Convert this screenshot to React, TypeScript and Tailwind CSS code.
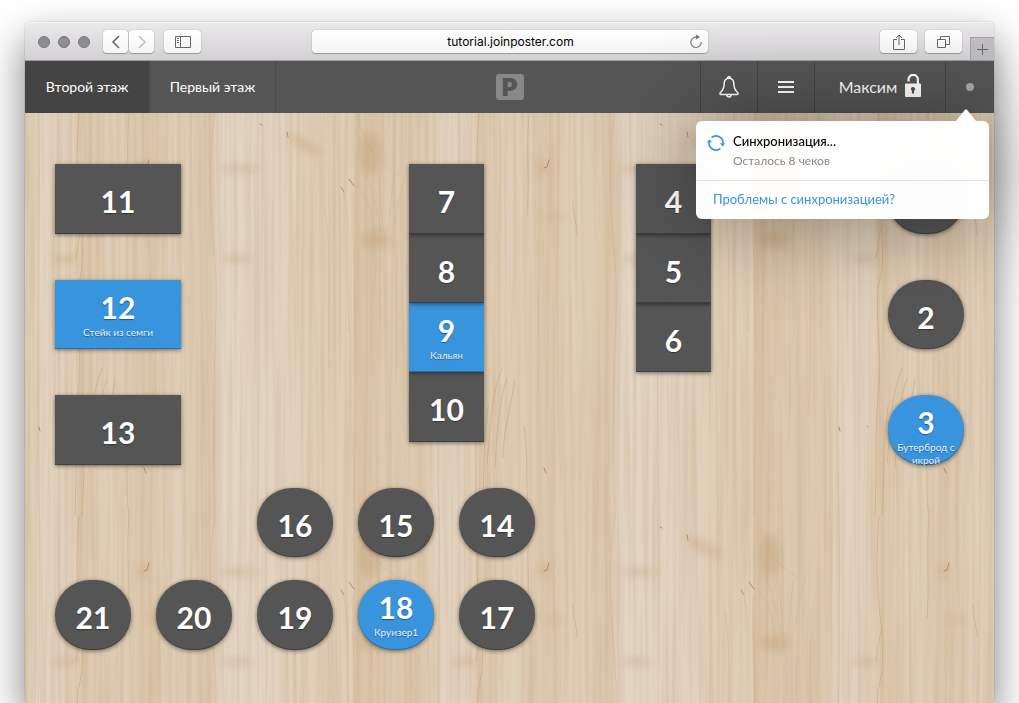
import React from "react";
import clsx from "clsx";

type Table = {
  id: number;
  x: number;
  y: number;
  shape: "long" | "square" | "round";
  tall?: boolean;
  order?: string;
};

const TABLES: Table[] = [
  { id: 11, x: 30, y: 51, shape: "long", tall: true },
  { id: 12, x: 30, y: 167, shape: "long", order: "Стейк из семги" },
  { id: 13, x: 30, y: 282, shape: "long", tall: true },
  { id: 10, x: 384, y: 259, shape: "square", tall: true },
  { id: 9, x: 384, y: 190, shape: "square", order: "Кальян" },
  { id: 8, x: 384, y: 121, shape: "square" },
  { id: 7, x: 384, y: 51, shape: "square", tall: true },
  { id: 6, x: 611, y: 190, shape: "square" },
  { id: 5, x: 611, y: 121, shape: "square" },
  { id: 4, x: 611, y: 51, shape: "square", tall: true },
  { id: 1, x: 863, y: 51, shape: "round", tall: true },
  { id: 2, x: 863, y: 167, shape: "round" },
  { id: 3, x: 863, y: 282, shape: "round", tall: true, order: "Бутерброд с икрой" },
  { id: 16, x: 232, y: 375, shape: "round" },
  { id: 15, x: 333, y: 375, shape: "round" },
  { id: 14, x: 434, y: 375, shape: "round" },
  { id: 21, x: 30, y: 467, shape: "round", tall: true },
  { id: 20, x: 131, y: 467, shape: "round", tall: true },
  { id: 19, x: 232, y: 467, shape: "round", tall: true },
  { id: 18, x: 333, y: 467, shape: "round", tall: true, order: "Круизер1" },
  { id: 17, x: 434, y: 467, shape: "round", tall: true },
];

const FLOORS = ["Второй этаж", "Первый этаж"];

export default function App() {
  return (
    <div className="flex min-h-screen flex-col overflow-hidden bg-white px-[25px] pt-[22px] font-['Lato','Noto_Sans',sans-serif]">
      <div className="flex flex-1 flex-col rounded-[5px] shadow-[0_0_1px_rgba(0,0,0,0.6),0_18px_42px_rgba(0,0,0,0.52)]">
        <BrowserBar />
        <Header />
        <Floor />
      </div>
    </div>
  );
}

function BrowserBar() {
  return (
    <div className="grid h-[39px] grid-cols-[1fr_minmax(0,396px)_1fr] items-center rounded-t-[5px] border-b border-[#9d9c9e] bg-linear-to-b from-[#ebe9eb] to-[#d3d1d3] pt-px shadow-[inset_0_1px_0_#f6f5f6]">
      <div className="flex items-center pl-[13px]">
        <div className="flex gap-2">
          {[0, 1, 2].map(i => (
            <span key={i} className="h-3 w-3 rounded-full border border-[#77767b] bg-[#8e8d92]" />
          ))}
        </div>
        <div className="ml-[13px] flex gap-px">
          <ToolButton label="Назад" className="w-[25px] text-[#5f5f5f]">
            <svg width="8" height="14" viewBox="0 0 8 14" fill="none" stroke="currentColor" strokeWidth="1.5"><path d="M7 1 1 7l6 6" /></svg>
          </ToolButton>
          <ToolButton label="Вперёд" className="w-[25px] text-[#bdbdbd]">
            <svg width="8" height="14" viewBox="0 0 8 14" fill="none" stroke="currentColor" strokeWidth="1.5"><path d="m1 1 6 6-6 6" /></svg>
          </ToolButton>
        </div>
        <ToolButton label="Боковая панель" className="ml-[10px] w-[37px] text-[#666]">
          <svg width="16" height="12" viewBox="0 0 16 12" fill="none" stroke="currentColor">
            <path d="M.5.5h15v11H.5zM5.5.5v11M2 2.5h2M2 4.500h2M2 6.500h2" />
          </svg>
        </ToolButton>
      </div>

      <div className="flex h-[23px] items-center rounded-[4px] bg-linear-to-b from-white to-[#f4f4f4] pr-[5px] pl-[21px] shadow-[0_0_1px_rgba(0,0,0,0.5),0_1px_1px_rgba(0,0,0,0.25)]">
        <input
          aria-label="Адрес"
          defaultValue="tutorial.joinposter.com"
          className="w-full min-w-0 bg-transparent text-center font-['Inter',sans-serif] text-[12px] leading-4 text-black outline-none"
        />
        <button aria-label="Обновить" className="text-[#777]">
          <svg width="14" height="15" viewBox="0 0 14 15" fill="none" stroke="currentColor" strokeWidth="1.2">
            <path d="M8 3.200A5.200 5.200 0 1 0 12.200 8" />
            <path d="M7 .5v5l4-2.500z" fill="currentColor" stroke="none" />
          </svg>
        </button>
      </div>

      <div className="flex h-full items-center justify-end">
        <ToolButton label="Поделиться" className="w-[37px] text-[#666]">
          <svg width="12" height="16" viewBox="0 0 12 16" fill="none" stroke="currentColor">
            <path d="M4 5.500H.5v10h11v-10H8M6 11V1M3 4l3-3 3 3" />
          </svg>
        </ToolButton>
        <ToolButton label="Показать вкладки" className="ml-2 w-[37px] text-[#666]">
          <svg width="13" height="12" viewBox="0 0 13 12" fill="none" stroke="currentColor">
            <path d="M.5 3.500h8v8h-8zM3.500 3.500v-3h9v8h-4" />
          </svg>
        </ToolButton>
        <button aria-label="Новая вкладка" className="ml-2 grid h-[23px] w-6 place-items-center self-end border-t border-l border-[#a3a2a4] bg-[#bfbdbf] text-[#666]">
          <svg width="11" height="11" viewBox="0 0 11 11" stroke="currentColor"><path d="M5.500 0v11M0 5.500h11" /></svg>
        </button>
      </div>
    </div>
  );
}

function ToolButton({ label, className, children }: { label: string; className: string; children: React.ReactNode }) {
  return (
    <button
      aria-label={label}
      className={clsx(
        "grid h-[23px] place-items-center rounded-[4px] bg-linear-to-b from-white to-[#f4f4f4] shadow-[0_0_1px_rgba(0,0,0,0.5),0_1px_1px_rgba(0,0,0,0.25)]",
        className
      )}
    >
      {children}
    </button>
  );
}

function Header() {
  return (
    <header className="relative z-10 grid h-[52px] grid-cols-[1fr_auto_1fr] items-center bg-[#555] text-white">
      <nav className="flex h-full">
        {FLOORS.map((floor, i) => (
          <button
            key={floor}
            className={clsx(
              "h-full border-r border-[#4b4b4b] text-[14px] leading-5 whitespace-nowrap",
              i === 0 ? "w-[125px] bg-[#444]" : "w-[126px]"
            )}
          >
            {floor}
          </button>
        ))}
      </nav>

      <div className="grid h-[26px] w-7 place-items-center rounded-[3px] bg-[#888] font-['Inter',sans-serif] text-[24px] leading-7 font-black text-[#555]">P</div>

      <div className="flex h-full justify-end">
        <button aria-label="Уведомления" className="grid h-full w-[57px] place-items-center border-l border-[#444]">
          <svg width="20" height="22" viewBox="0 0 20 22" fill="none" stroke="currentColor" strokeWidth="1.500" strokeLinejoin="round">
            <path d="M10 2.200C6.900 2.200 5.200 4.600 5.200 7.600c0 4.700-1.300 7-3.900 9.200-.7.900-.3 1.700.7 1.700h16c1 0 1.400-.8.700-1.700-2.600-2.200-3.900-4.500-3.900-9.200 0-3-1.700-5.400-4.800-5.400Z" />
            <path d="M8.500 2.200a1.500 1.500 0 0 1 3 0M7.800 18.800a2.200 2.200 0 0 0 4.400 0" />
          </svg>
        </button>
        <button aria-label="Меню" className="grid h-full w-[57px] place-items-center border-l border-[#444]">
          <svg width="16" height="12" viewBox="0 0 16 12" fill="currentColor"><path d="M0 0h16v2H0zM0 5h16v2H0zM0 10h16v2H0z" /></svg>
        </button>
        <button className="flex h-full w-[131px] items-center justify-center gap-2 border-l border-[#444] text-[16px] leading-5">
          Максим
          <svg width="16" height="23" viewBox="0 0 16 23" className="mb-1">
            <path d="M3.500 7.500V5.500a4.700 4.700 0 0 1 9.400 0V10" fill="none" stroke="currentColor" strokeWidth="2.200" />
            <path fill="currentColor" fillRule="evenodd" d="M1 9.500h14a1 1 0 0 1 1 1V22a1 1 0 0 1-1 1H1a1 1 0 0 1-1-1V10.500a1 1 0 0 1 1-1Zm7 3.500a2 2 0 0 0-1.100 3.700V19.500h2.200v-2.800A2 2 0 0 0 8 13Z" />
          </svg>
        </button>
        <div className="relative h-full w-[49px] border-l border-[#444]">
          <button aria-label="Состояние сети" className="grid h-full w-full place-items-center">
            <span className="h-2 w-2 rounded-full bg-[#a8a8a8]" />
          </button>
          <SyncPopup />
        </div>
      </div>
    </header>
  );
}

function SyncPopup() {
  return (
    <div className="absolute top-[60px] right-[5px] w-[293px] rounded-[6px] bg-white/98 shadow-[0_0_90px_rgba(0,0,0,0.4)] backdrop-blur-lg">
      <svg width="20" height="12" viewBox="0 0 20 12" className="absolute -top-3 right-[13px] text-white">
        <path fill="currentColor" d="M0 12 9 .8q1-1 2 0L20 12z" />
      </svg>
      <div className="flex gap-2 px-[11px] pt-[11px] pb-[10px]">
        <svg width="18" height="18" viewBox="0 0 18 18" fill="none" stroke="#3994de" strokeWidth="1.700" className="mt-0.5">
          <path d="M4.500 3.600A7 7 0 0 1 16 9.500M13.500 14.400A7 7 0 0 1 2 8.500" />
          <path fill="#3994de" stroke="none" d="M12.800 9.200H18.200L15.800 12.600zM-.2 8.600H5.200L2.300 5.200z" />
        </svg>
        <div>
          <p className="text-[13px] leading-[18px] font-medium text-black">Синхронизация...</p>
          <p className="mt-0.5 text-[12px] leading-[18px] text-[#888]">Осталось 8 чеков</p>
        </div>
      </div>
      <div className="border-t border-[#e2e2e2] px-[17px] pt-2 pb-[10px]">
        <a href="#sync-help" className="block text-[13px] leading-5 text-[#3994de]">Проблемы с синхронизацией?</a>
      </div>
    </div>
  );
}

function Floor() {
  return (
    <main className="relative min-h-[590px] flex-1 overflow-hidden rounded-b-[4px] bg-[#dfceb8]">
      <Wood />
      {TABLES.map(table => (
        <TableTile key={table.id} table={table} />
      ))}
    </main>
  );
}

function TableTile({ table }: { table: Table }) {
  const { id, x, y, shape, tall, order } = table;
  return (
    <button
      style={{ left: x, top: y }}
      className={clsx(
        "absolute flex flex-col items-center overflow-hidden text-center text-white [text-shadow:0_1px_1px_rgba(0,0,0,0.4)]",
        "shadow-[inset_0_-1px_0_rgba(0,0,0,0.25),0_1px_4px_rgba(0,0,0,0.5)]",
        shape === "long" && "w-[126px]",
        shape === "square" && "w-[75px]",
        shape === "round" && "w-[76px] rounded-full",
        tall ? "h-[70px]" : "h-[69px]",
        order ? "bg-[#3994de] pt-[9px]" : "bg-[#555] pt-[19px]"
      )}
    >
      <span className="text-[30px] leading-9 font-bold">{id}</span>
      {order && <span className="mt-px px-1 text-[10px] leading-[13px] text-white/90">{order}</span>}
    </button>
  );
}

// Maple veneer: one repeating board plus fine vertical grain on top
function Wood() {
  return (
    <svg className="absolute inset-0 h-full w-full" aria-hidden="true">
      <defs>
        <linearGradient id="board">
          <stop offset="0" stopColor="#ddc9af" />
          <stop offset=".04" stopColor="#e2d4c1" />
          <stop offset=".12" stopColor="#e0cfb9" />
          <stop offset=".14" stopColor="#dbc7ac" />
          <stop offset=".22" stopColor="#e0cfb9" />
          <stop offset=".31" stopColor="#dbc7ac" />
          <stop offset=".38" stopColor="#e0cfba" />
          <stop offset=".46" stopColor="#dac6ac" />
          <stop offset=".5" stopColor="#e3d5c4" />
          <stop offset=".62" stopColor="#e2d3c0" />
          <stop offset=".76" stopColor="#dfccb5" />
          <stop offset=".82" stopColor="#e0cfb9" />
          <stop offset=".824" stopColor="#d9c2a5" />
          <stop offset=".9" stopColor="#dcc9b0" />
          <stop offset="1" stopColor="#ddc9af" />
        </linearGradient>
        <filter id="soft" x="-50%" y="-50%" width="200%" height="200%"><feGaussianBlur stdDeviation="4" /></filter>
        <filter id="grain" x="0" y="0" width="100%" height="100%" colorInterpolationFilters="sRGB">
          <feTurbulence type="fractalNoise" baseFrequency=".25 .004" numOctaves="3" seed="7" />
          <feColorMatrix values="0 0 0 0 .7  0 0 0 0 .54  0 0 0 0 .36  1.100 0 0 0 -.42" />
        </filter>
        <pattern id="wood" width="400" height="403" patternUnits="userSpaceOnUse">
          <rect width="400" height="403" fill="url(#board)" />
          <g fill="#bc9468" filter="url(#soft)" opacity=".3">
            <ellipse cx="350" cy="127" rx="16" ry="9" />
            <ellipse cx="345" cy="40" rx="12" ry="22" />
            <ellipse cx="118" cy="55" rx="5" ry="8" />
            <ellipse cx="215" cy="56" rx="20" ry="4" />
            <ellipse cx="130" cy="104" rx="12" ry="3" />
            <ellipse cx="40" cy="146" rx="15" ry="4" />
            <ellipse cx="280" cy="32" rx="20" ry="6" transform="rotate(30 280 32)" />
            <ellipse cx="212" cy="146" rx="16" ry="4" />
          </g>
          <g fill="none" stroke="#b98f66" strokeWidth="1" opacity=".36">
            <path d="M50 403c2-45-1-80 4-130 3-35-4-65-1-100 8-25 3-40 4-60-6-35-6-75-3-113" />
            <path d="M57 403c3-40 0-65 6-110M62 350c4-35 3-65 15-95M70 355c2-30 2-58 12-90M78 345c0-28 8-50 12-80M57 110c-3 12-4 25-6 35" />
            <path d="M104 0c-3 35 1 65-2 103M104 403c-4-28 0-50-5-90M148 88c-1 12 4 20 4 34" />
            <path d="M190 0c-8 50-4 100 0 150s-5 120 0 253M233 0v403M318 80c8 20 3 60 6 140M328 80c-1 50 4 90 1 323M300 95c6 40 3 80 4 160" opacity=".6" />
            <path d="M332 72c14 20 15 28 18 50M342 62c6 20 10 30 14 58M354 60c1 22 2 38 4 58M369 62c-3 22-4 36-6 56M382 55c-7 24-9 40-14 64M334 10c12 30 18 40 40 52" opacity=".5" />
            <path d="M14 0c2 130-4 280 0 403M34 0v403M372 140c-2 40 2 80-1 130M386 120c-3 60 2 120-3 180" opacity=".5" />
          </g>
          <g fill="none" stroke="#8f6040" strokeLinecap="round" opacity=".6">
            <path d="m124 47-2 7-3 1M235 11l2 1M262 19l1 5M316 74l3 5M324 66l5 7M14 314l1 4M42 313l1 1M119 355l2 5" />
          </g>
        </pattern>
      </defs>
      <rect width="100%" height="100%" fill="url(#wood)" />
      <rect width="100%" height="100%" filter="url(#grain)" opacity=".4" />
    </svg>
  );
}
